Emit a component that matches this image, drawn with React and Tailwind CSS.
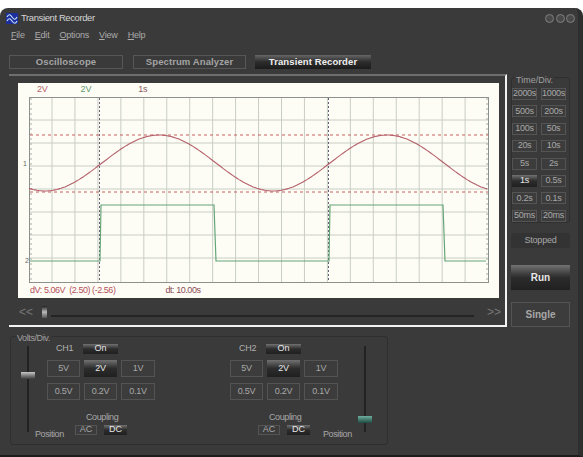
const font = { fontFamily: '"Liberation Sans", Arial, sans-serif' };

const TIME_RATES = ["2000s", "1000s", "500s", "200s", "100s", "50s", "20s", "10s", "5s", "2s", "1s", "0.5s", "0.2s", "0.1s", "50ms", "20ms"];
const VOLT_RATES = ["5V", "2V", "1V", "0.5V", "0.2V", "0.1V"];
const MENU = [
  ["F", "ile"],
  ["E", "dit"],
  ["O", "ptions"],
  ["V", "iew"],
  ["H", "elp"],
];

function SmallButton({ label, active, className = "" }) {
  const look = active
    ? "bg-gradient-to-b from-[#727272] via-[#2c2c2c] to-[#202020] text-[#e6e6e6]"
    : "border border-[#545454] bg-[#3c3c3c] text-[#a8a8a8]";
  return <div className={`flex items-center justify-center ${look} ${className}`}>{label}</div>;
}

function Tab({ label, active, className = "" }) {
  const look = active
    ? "bg-gradient-to-b from-[#666666] via-[#2c2c2c] to-[#1c1c1c] text-[#f0f0f0]"
    : "border border-[#565656] text-[#a4a4a4]";
  return (
    <div className={`flex h-[14px] items-center justify-center text-[9.5px] font-bold tracking-[0.1px] ${look} ${className}`}>
      {label}
    </div>
  );
}

function Scope() {
  const sine = [];
  for (let x = 29; x <= 487; x += 2) {
    sine.push(`${x},${(163 + 28 * Math.cos((2 * Math.PI * (x - 45)) / 228)).toFixed(1)}`);
  }
  const columns = Array.from({ length: 19 }, (_, i) => 52 + i * 22.95);
  const rows = [120, 143, 166, 189, 212, 235, 258];
  return (
    <svg className="block h-[186px] w-[481px]" viewBox="18 97 481 186">
      {columns.map((x) => (
        <line key={x} x1={x} x2={x} y1="97" y2="282" stroke="#c9cec4" strokeWidth="1" />
      ))}
      {rows.map((y) => (
        <line key={y} x1="29" x2="488" y1={y} y2={y} stroke="#c9cec4" strokeWidth="1" />
      ))}
      <rect x="29.5" y="97.5" width="459" height="185" fill="none" stroke="#8d918d" strokeWidth="1" />
      <line x1="31" x2="31" y1="98" y2="282" stroke="#a9aca5" strokeDasharray="2 3" />
      <line x1="487" x2="487" y1="98" y2="282" stroke="#a9aca5" strokeDasharray="2 3" />
      <line x1="30" x2="488" y1="135" y2="135" stroke="#c8605f" strokeDasharray="3 3" />
      <line x1="30" x2="488" y1="192" y2="192" stroke="#c8605f" strokeDasharray="3 3" />
      <line x1="99.5" x2="99.5" y1="98" y2="282" stroke="#6a5f78" strokeDasharray="2 2" />
      <line x1="328.5" x2="328.5" y1="98" y2="282" stroke="#6a5f78" strokeDasharray="2 2" />
      <polyline points={sine.join(" ")} fill="none" stroke="#b5606a" strokeWidth="1.1" />
      <polyline
        points="30,261 100,261 101,205 214,205 216,261 329,261 330,205 443,205 445,261 486,261"
        fill="none"
        stroke="#65a678"
        strokeWidth="1.2"
      />
      <text x="23" y="166" fontSize="7" fill="#666666">1</text>
      <text x="25" y="263" fontSize="7" fill="#666666">2</text>
    </svg>
  );
}

function Slider({ thumbTop, green }) {
  return (
    <div className="relative h-[86px] w-[14px]">
      <div className="absolute bottom-0 left-[6px] top-0 w-[2px] bg-[#222222]" />
      <div
        className={`absolute left-0 h-[7px] w-[14px] ${green ? "bg-gradient-to-b from-[#6fb0a0] to-[#1f4a42]" : "bg-gradient-to-b from-[#c8c8c8] to-[#3c3c3c]"}`}
        style={{ top: thumbTop }}
      />
    </div>
  );
}

function Channel({ name }) {
  return (
    <div className="flex w-[108px] flex-col">
      <div className="flex h-[11px] items-center">
        <span className="ml-[9px] w-[27px] text-[9px] tracking-[-0.3px] text-[#b0b0b0]">{name}</span>
        <SmallButton label="On" active className="h-[10px] w-[35px] text-[9px]" />
      </div>
      <div className="mt-[6px] grid grid-cols-[33px_33px_34px] gap-x-[4px] gap-y-[6px] text-[9px] tracking-[-0.2px]">
        {VOLT_RATES.map((rate) => (
          <SmallButton key={rate} label={rate} active={rate === "2V"} className="h-[17px]" />
        ))}
      </div>
      <div className="mt-[11px] pl-[39px] text-[9px] leading-[12px] tracking-[-0.4px] text-[#a8a8a8]">Coupling</div>
      <div className="mt-[2px] flex gap-[7px] pl-[28px] text-[9px]">
        <SmallButton label="AC" className="h-[10px] w-[22px]" />
        <SmallButton label="DC" active className="h-[10px] w-[23px]" />
      </div>
    </div>
  );
}

export default function App() {
  return (
    <div className="h-[457px] w-[583px] overflow-hidden bg-white pt-[8px]" style={font}>
      <div className="h-[449px] w-[583px] rounded-t-lg border-b-2 border-r-[5px] border-b-[#1c1c1c] border-r-[#2e2e2e] bg-[#3a3a3a]">
        <div className="flex h-[20px] items-center pl-[6px] pr-[3px]">
          <svg width="12" height="11" viewBox="0 0 12 11">
            <rect width="12" height="11" rx="1" fill="#1c2f9c" />
            <path d="M1 4C2.5 1 4 1 6 4S9.5 7 11 4" fill="none" stroke="#c8e4f8" strokeWidth="1.1" />
            <path d="M1 8C2.5 5 4 5 6 8S9.5 11 11 8" fill="none" stroke="#c8e4f8" strokeWidth="1.1" />
          </svg>
          <span className="ml-[3px] text-[9.5px] tracking-[-0.4px] text-[#d4d4d4]">Transient Recorder</span>
          <div className="ml-auto flex gap-[1.5px]">
            {[0, 1, 2].map((i) => (
              <div key={i} className="h-[9px] w-[9px] rounded-full border border-[#808080] bg-[#4a4a4a]" />
            ))}
          </div>
        </div>

        <div className="flex h-[16px] items-center gap-[10px] pl-[11px] text-[9px] tracking-[-0.2px] text-[#aaaaaa]">
          {MENU.map(([key, rest]) => (
            <span key={key}>
              <span className="underline">{key}</span>
              {rest}
            </span>
          ))}
        </div>

        <div className="mt-[11px] flex pl-[9px]">
          <Tab label="Oscilloscope" className="w-[114px]" />
          <Tab label="Spectrum Analyzer" className="ml-[10px] w-[113px]" />
          <Tab label="Transient Recorder" active className="ml-[9px] w-[116px]" />
        </div>

        <div className="mt-[5px] flex pl-[9px]">
          <div className="h-[253px] w-[498px] border-b-2 border-r-2 border-t-[2px] border-b-[#f2f2f2] border-r-[#f2f2f2] border-t-[#6e6e6e] bg-[#3a3a3a] pl-[9px] pt-[7px]">
            <div className="h-[215px] w-[481px] bg-[#fdfdf6] text-[9px] tracking-[-0.2px]">
              <div className="flex h-[14px] items-center">
                <span className="ml-[19px] text-[#b5606a]">2V</span>
                <span className="ml-[33px] text-[#5f9a70]">2V</span>
                <span className="ml-[47px] text-[#8a5a65]">1s</span>
              </div>
              <Scope />
              <div className="flex h-[15px] items-center tracking-[-0.45px] text-[#b5505a]">
                <span className="ml-[12px] whitespace-pre">dV: 5.06V  (2.50) (-2.56)</span>
                <span className="ml-[50px] text-[#8a4a55]">dt: 10.00s</span>
              </div>
            </div>
            <div className="relative flex h-[27px] items-center">
              <span className="ml-[1px] text-[12px] text-[#777777]">&lt;&lt;</span>
              <div className="ml-[18px] mt-[8px] h-[2px] w-[423px] bg-[#242424]" />
              <span className="ml-[13px] text-[12px] text-[#777777]">&gt;&gt;</span>
              <div className="absolute left-[24px] top-[8px] h-[12px] w-[5px] bg-gradient-to-b from-[#222222] via-[#bbbbbb] to-[#555555]" />
            </div>
          </div>

          <div className="ml-[4px] flex w-[59px] flex-col">
            <div className="relative mt-[3px] h-[146px] rounded-[3px] border border-[#2f2f2f]">
              <div className="absolute -top-[3px] left-[3px] bg-[#3a3a3a] px-[1px] text-[9px] leading-[11px] text-[#a0a0a0]">Time/Div.</div>
              <div className="mt-[10px] grid grid-cols-[25px_25px] gap-x-[4px] gap-y-[5.4px] text-[9px] tracking-[-0.3px]">
                {TIME_RATES.map((rate) => (
                  <SmallButton key={rate} label={rate} active={rate === "1s"} className="h-[12px]" />
                ))}
              </div>
            </div>
            <div className="mt-[10px] flex h-[15px] items-center justify-center rounded-[3px] bg-[#333333] text-[9px] tracking-[-0.2px] text-[#a8a8a8]">Stopped</div>
            <SmallButton label="Run" active className="mt-[17px] h-[25px] text-[10px] font-bold" />
            <SmallButton label="Single" className="mt-[12px] h-[25px] text-[10px] font-bold" />
          </div>
        </div>

        <div className="relative ml-[10px] mt-[9px] flex h-[109px] w-[378px] rounded-[3px] border border-[#2f2f2f] pt-[6px]">
          <div className="absolute -top-[5px] left-[5px] bg-[#3a3a3a] px-[1px] text-[9px] leading-[12px] tracking-[-0.4px] text-[#a0a0a0]">Volts/Div.</div>
          <div className="ml-[10px] mt-[3px]">
            <Slider thumbTop={26} />
          </div>
          <div className="ml-[12px]">
            <Channel name="CH1" />
          </div>
          <div className="ml-[75px]">
            <Channel name="CH2" />
          </div>
          <div className="ml-[20px] mt-[3px]">
            <Slider thumbTop={70} green />
          </div>
          <span className="absolute left-[24px] top-[91px] text-[9px] leading-[12px] tracking-[-0.4px] text-[#a8a8a8]">Position</span>
          <span className="absolute left-[312px] top-[91px] text-[9px] leading-[12px] tracking-[-0.4px] text-[#a8a8a8]">Position</span>
        </div>
      </div>
    </div>
  );
}
